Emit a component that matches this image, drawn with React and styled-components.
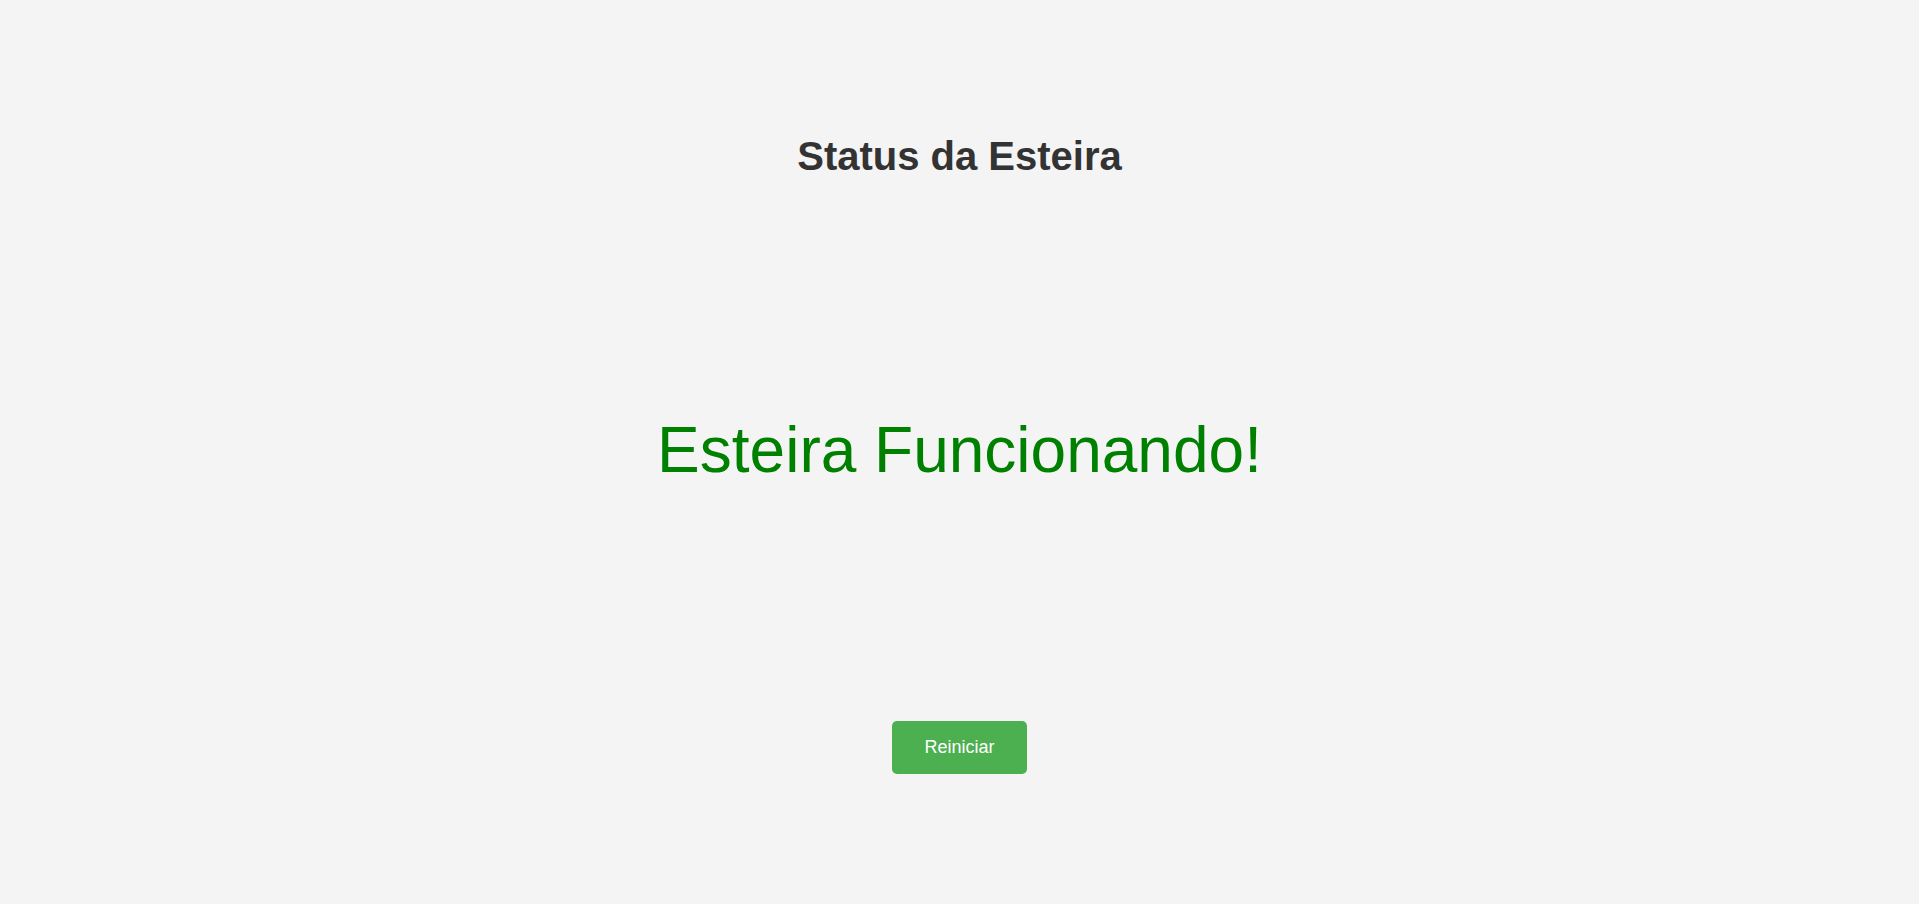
import styled, { createGlobalStyle } from "styled-components";

const GlobalStyle = createGlobalStyle`
  html, body {
    margin: 0;
    padding: 0;
    background: #f4f4f4;
    font-family: "Liberation Sans", Arial, sans-serif;
  }
`;

const Container = styled.div`
  box-sizing: border-box;
  height: 100vh;
  padding: 134px 0 130px;
  display: flex;
  flex-direction: column;
  align-items: center;
  justify-content: space-between;
`;

const Title = styled.h1`
  margin: 0;
  font-size: 40px;
  font-weight: 700;
  color: #333;
`;

const Status = styled.div`
  font-size: 64px;
  color: ${(p) => (p.ok ? "#008000" : "#d00000")};
`;

const Button = styled.button`
  font-family: inherit;
  font-size: 18px;
  color: #fff;
  background: #4caf50;
  border: none;
  border-radius: 5px;
  padding: 16px 32px;
  cursor: pointer;

  &:hover {
    background: #45a049;
  }
`;

const App = () => {
  return (
    <>
      <GlobalStyle />
      <Container>
        <Title>Status da Esteira</Title>
        <Status ok>Esteira Funcionando!</Status>
        <Button>Reiniciar</Button>
      </Container>
    </>
  );
};

export default App;
